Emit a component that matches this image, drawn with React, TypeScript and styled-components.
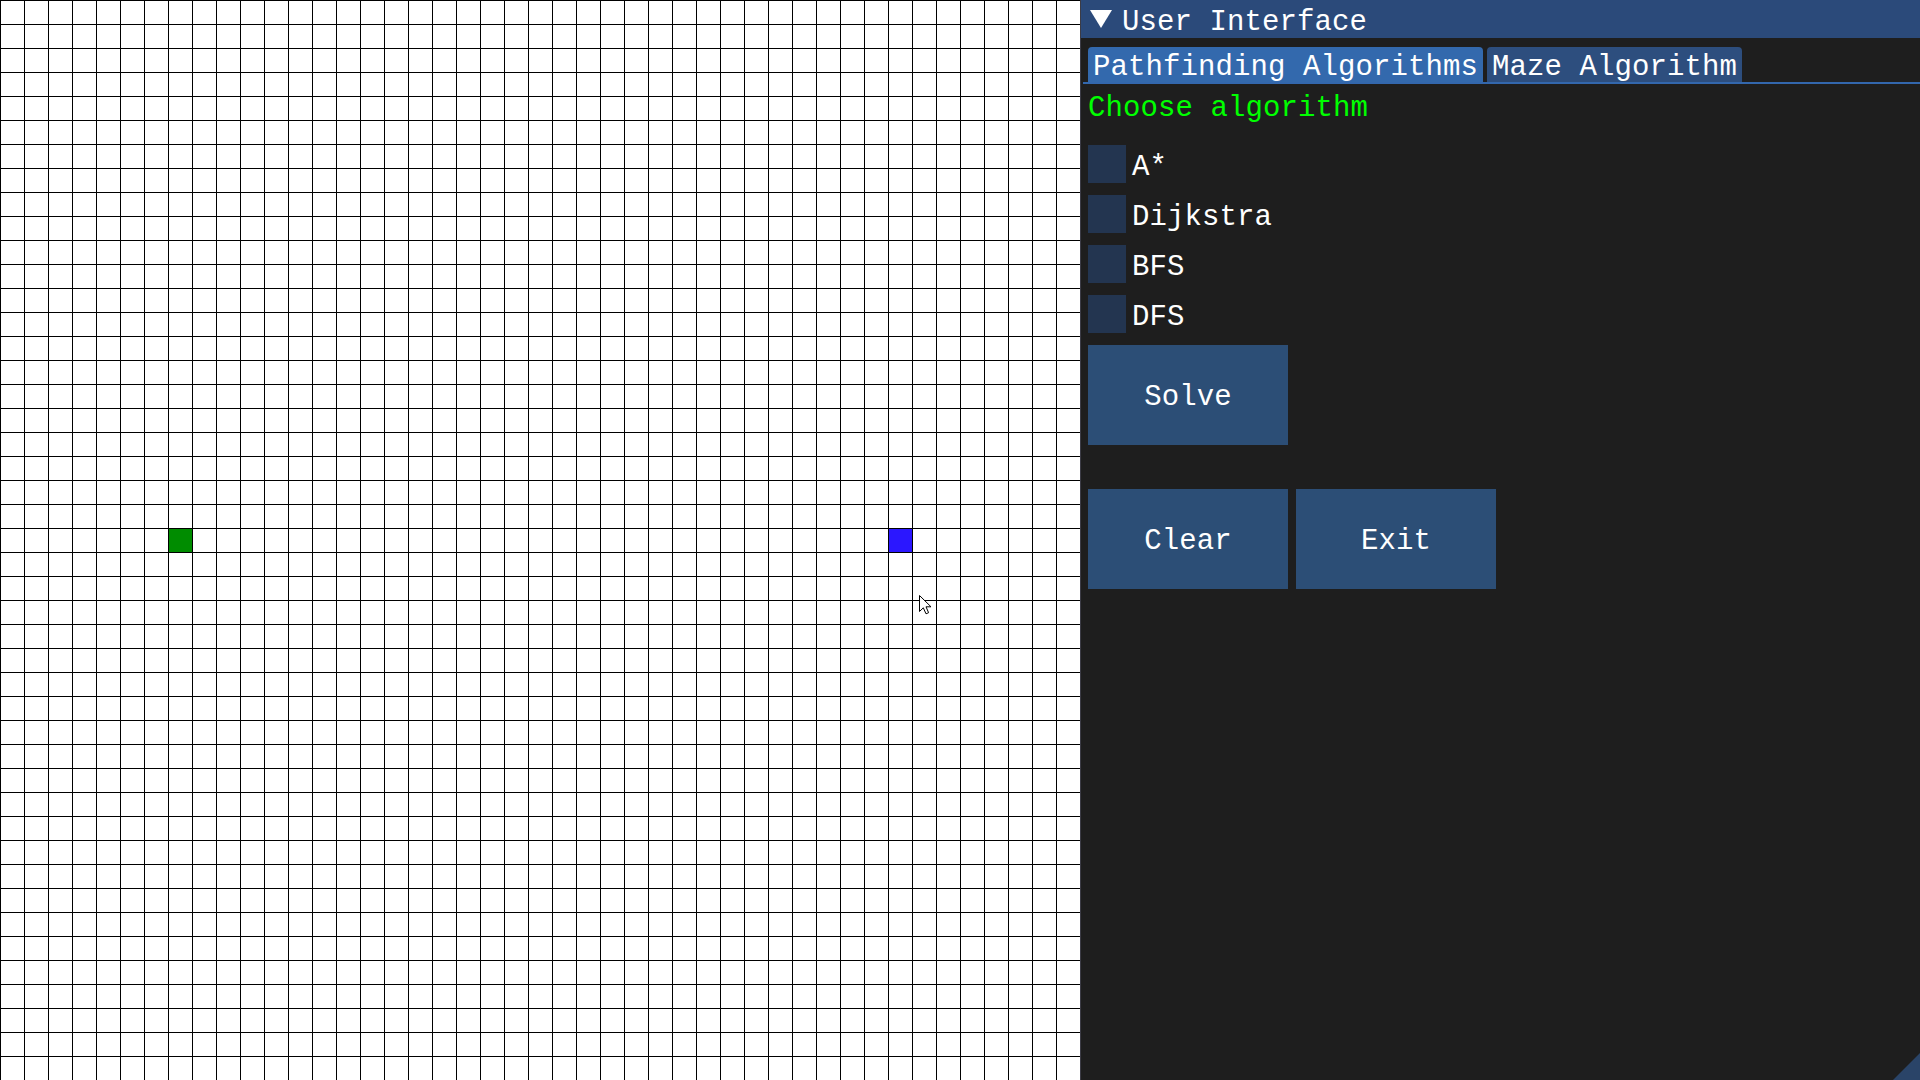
import React from "react";
import styled, { createGlobalStyle } from "styled-components";

const GlobalStyle = createGlobalStyle`
  html, body {
    margin: 0;
    padding: 0;
    background: #ffffff;
    overflow: hidden;
  }
  * { box-sizing: border-box; }
`;

const CELL = 24;
const N = 45;

const Screen = styled.div`
  display: flex;
  width: 1920px;
  height: 1080px;
  overflow: hidden;
  font-family: "Liberation Mono", "DejaVu Sans Mono", monospace;
`;

const Board = styled.div`
  position: relative;
  flex: 0 0 ${CELL * N}px;
  height: ${CELL * N}px;
  display: grid;
  grid-template-columns: repeat(${N}, ${CELL}px);
  grid-template-rows: repeat(${N}, ${CELL}px);
  background-color: #ffffff;
  background-image:
    linear-gradient(to right, #000000 1px, transparent 1px),
    linear-gradient(to bottom, #000000 1px, transparent 1px);
  background-size: ${CELL}px ${CELL}px;
`;

const Cell = styled.div<{ $col: number; $row: number; $color: string }>`
  grid-column: ${(p) => p.$col + 1};
  grid-row: ${(p) => p.$row + 1};
  margin: 1px 0 0 1px;
  background: ${(p) => p.$color};
`;

const Cursor = styled.svg`
  position: absolute;
  left: 919px;
  top: 595px;
  width: 13px;
  height: 20px;
  overflow: visible;
`;

const Panel = styled.div`
  position: relative;
  flex: 1 1 auto;
  height: 1080px;
  background: #1e1e1e;
  border-left: 1px solid #3c3c46;
  display: flex;
  flex-direction: column;
  color: #ffffff;
  font-size: 29px;
  letter-spacing: 0.1px;
`;

const TitleBar = styled.div`
  height: 38px;
  background: #2b4a7a;
  display: flex;
  align-items: center;
  gap: 10px;
  padding: 0 0 0 9px;
`;

const TitleArrow = styled.svg`
  width: 22px;
  height: 18px;
  flex: 0 0 auto;
`;

const TitleText = styled.span`
  line-height: 32px;
  padding-top: 7px;
  white-space: pre;
`;

const Body = styled.div`
  display: flex;
  flex-direction: column;
  padding: 9px 0 0 7px;
`;

const TabBar = styled.div`
  display: flex;
  gap: 4px;
  margin-left: -5px;
  padding-left: 5px;
  border-bottom: 2px solid #3367ad;
`;

const Tab = styled.div<{ $active?: boolean }>`
  height: 35px;
  padding: 6px 5px 0 5px;
  line-height: 29px;
  border-radius: 4px 4px 0 0;
  background: ${(p) => (p.$active ? "#3369ad" : "#2d4e7e")};
  white-space: pre;
`;

const Heading = styled.div`
  margin-top: 9px;
  line-height: 32px;
  color: #00ff00;
  white-space: pre;
`;

const Options = styled.div`
  display: flex;
  flex-direction: column;
  gap: 12px;
  margin-top: 20px;
`;

const OptionRow = styled.label`
  display: flex;
  align-items: center;
  gap: 6px;
  height: 38px;
`;

const Box = styled.span`
  width: 38px;
  height: 38px;
  background: #233550;
  flex: 0 0 auto;
`;

const OptionText = styled.span`
  line-height: 32px;
  padding-top: 8px;
  white-space: pre;
`;

const Actions = styled.div`
  display: flex;
  flex-direction: column;
  gap: 44px;
  margin-top: 12px;
`;

const ButtonRow = styled.div`
  display: flex;
  gap: 8px;
`;

const Button = styled.button`
  width: 200px;
  height: 100px;
  border: none;
  padding: 6px 0 0 0;
  margin: 0;
  background: #2c4e76;
  color: #ffffff;
  font-family: inherit;
  font-size: 29px;
  letter-spacing: 0.1px;
  line-height: 32px;
  cursor: default;
`;

const ResizeGrip = styled.div`
  position: absolute;
  right: 0;
  bottom: 0;
  width: 27px;
  height: 27px;
  background: #2a4468;
  clip-path: polygon(100% 0, 100% 100%, 0 100%);
`;

const algorithms = ["A*", "Dijkstra", "BFS", "DFS"];

export default function App() {
  return (
    <>
      <GlobalStyle />
      <Screen>
        <Board>
          <Cell $col={7} $row={22} $color="#008c00" />
          <Cell $col={37} $row={22} $color="#2b17ff" />
          <Cursor viewBox="0 0 13 20">
            <path
              d="M0.5 0.5 L0.5 16.5 L4.3 12.8 L7 18.8 L9.6 17.7 L7 11.8 L12 11.8 Z"
              fill="#ffffff"
              stroke="#000000"
              strokeWidth="1"
              strokeLinejoin="miter"
            />
          </Cursor>
        </Board>
        <Panel>
          <TitleBar>
            <TitleArrow viewBox="0 0 22 18">
              <polygon points="0,0 22,0 11,18" fill="#ffffff" />
            </TitleArrow>
            <TitleText>User Interface</TitleText>
          </TitleBar>
          <Body>
            <TabBar>
              <Tab $active>Pathfinding Algorithms</Tab>
              <Tab>Maze Algorithm</Tab>
            </TabBar>
            <Heading>Choose algorithm</Heading>
            <Options>
              {algorithms.map((a) => (
                <OptionRow key={a}>
                  <Box />
                  <OptionText>{a}</OptionText>
                </OptionRow>
              ))}
            </Options>
            <Actions>
              <ButtonRow>
                <Button>Solve</Button>
              </ButtonRow>
              <ButtonRow>
                <Button>Clear</Button>
                <Button>Exit</Button>
              </ButtonRow>
            </Actions>
          </Body>
          <ResizeGrip />
        </Panel>
      </Screen>
    </>
  );
}
